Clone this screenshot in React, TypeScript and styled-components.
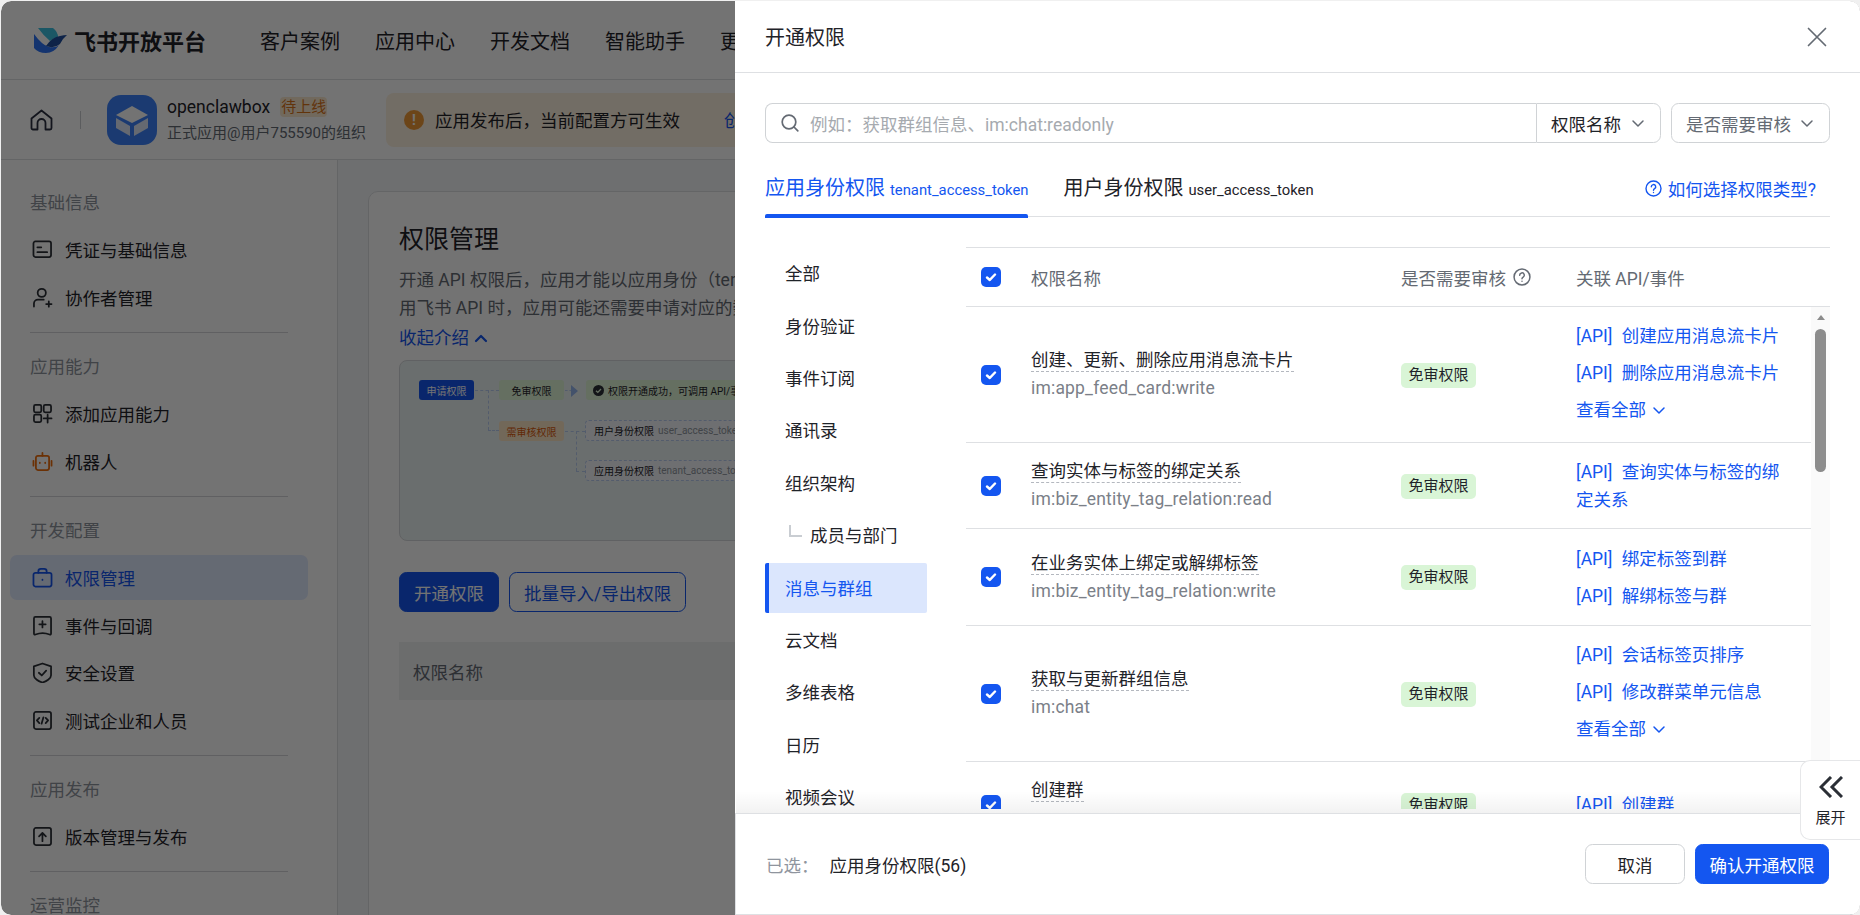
import styled, { createGlobalStyle } from "styled-components";

const GlobalStyle = createGlobalStyle`
  html, body {
    margin: 0;
    padding: 0;
    background: #f0f0f0;
  }
  * {
    box-sizing: border-box;
  }
  svg {
    flex-shrink: 0;
  }
  body {
    font-family: Roboto, "Noto Sans CJK SC", sans-serif;
    color: #1f2329;
  }
`;

const Frame = styled.div`
  width: 1860px;
  height: 915px;
  padding: 1px 0 0 1px;
  overflow: hidden;
`;

const Screen = styled.div`
  position: relative;
  width: 1859px;
  height: 914px;
  overflow: hidden;
  border-radius: 10px;
  background: #fff;
`;

const Mask = styled.div`
  position: absolute;
  inset: 0;
  background: rgba(0, 0, 0, 0.55);
  backdrop-filter: blur(0.5px);
`;

/* ---------- page behind the drawer ---------- */

const PageLayer = styled.div`
  width: 740px;
  height: 100%;
  overflow: hidden;
`;

const TopNav = styled.header`
  display: flex;
  align-items: center;
  height: 79px;
  padding-left: 33px;
  border-bottom: 1px solid #dee0e3;
`;

const BrandName = styled.div`
  flex: none;
  margin-left: 7px;
  width: 132px;
  font-size: 22px;
  font-weight: 700;
  white-space: nowrap;
`;

const TopLinks = styled.nav`
  flex: none;
  display: flex;
  gap: 35px;
  margin-left: 54px;
  font-size: 20px;
  white-space: nowrap;
`;

const SubBar = styled.div`
  display: flex;
  align-items: center;
  height: 80px;
  padding-left: 29px;
  border-bottom: 1px solid #dee0e3;
  white-space: nowrap;
`;

const VDivider = styled.span`
  flex: none;
  width: 1px;
  height: 18px;
  margin: 0 26px 0 27px;
  background: #c9cdd1;
`;

const AppInfo = styled.div`
  flex: none;
  width: 219px;
  margin-left: 10px;
  line-height: 26px;
`;

const AppName = styled.div`
  display: flex;
  align-items: center;
  font-size: 17.5px;
`;

const AppStatus = styled.span`
  margin-left: 10px;
  padding: 0 1px;
  height: 20px;
  line-height: 20px;
  border-radius: 4px;
  font-size: 15px;
  color: #d9741a;
  background: #fbe9cf;
`;

const AppOrg = styled.div`
  font-size: 15px;
  color: #646a73;
`;

const Notice = styled.div`
  flex: none;
  display: flex;
  align-items: center;
  width: 500px;
  height: 54px;
  padding-left: 18px;
  border-radius: 8px;
  font-size: 17.5px;
  background: #fdf1df;
`;

const NoticeIcon = styled.span`
  display: flex;
  align-items: center;
  justify-content: center;
  width: 20px;
  height: 20px;
  margin-right: 11px;
  border-radius: 50%;
  font-size: 14px;
  font-weight: 700;
  color: #fff;
  background: #f09a37;
`;

const NoticeLink = styled.span`
  margin-left: 44px;
  color: #1456f0;
`;

const Body = styled.div`
  display: flex;
  height: 755px;
`;

const Sidebar = styled.aside`
  flex: none;
  width: 337px;
  padding-top: 29.5px;
  border-right: 1px solid #dee0e3;
`;

const GroupLabel = styled.div`
  height: 26px;
  margin: 0 0 11.5px 29px;
  line-height: 26px;
  font-size: 17.5px;
  color: #8f959e;
`;

const GroupRule = styled.div`
  height: 1px;
  margin: 12px 49px 21px 29px;
  background: #d4d6d9;
`;

const SideItem = styled.div<{ $active?: boolean }>`
  display: flex;
  align-items: center;
  gap: 12px;
  height: 45px;
  margin: 2.5px 29px 0 9px;
  padding-left: 22px;
  border-radius: 7px;
  font-size: 17.5px;
  color: ${(p) => (p.$active ? "#1456f0" : "#1f2329")};
  background: ${(p) => (p.$active ? "#e1eaff" : "transparent")};
  &:first-of-type {
    margin-top: 0;
  }
`;

const SideIcon = styled.svg<{ $tone?: string }>`
  flex: none;
  width: 21px;
  height: 21px;
  fill: none;
  stroke: ${(p) => p.$tone || "#2b2f36"};
  stroke-width: 1.8;
  stroke-linecap: round;
  stroke-linejoin: round;
`;

const Main = styled.main`
  flex: none;
  width: 403px;
  padding: 31px 0 0 30px;
  background: #f4f7f8;
`;

const Card = styled.section`
  width: 900px;
  height: 800px;
  padding: 30px;
  border: 1px solid #dee0e3;
  border-radius: 10px;
  background: #fff;
`;

const PageTitle = styled.h1`
  margin: 0 0 9px;
  font-size: 25px;
  font-weight: 400;
  line-height: 35px;
`;

const Intro = styled.p`
  margin: 0;
  width: 340px;
  overflow: hidden;
  line-height: 28px;
  font-size: 17.5px;
  color: #646a73;
  white-space: nowrap;
`;

const Collapse = styled.div`
  display: flex;
  align-items: center;
  gap: 5px;
  margin-top: 2px;
  line-height: 28px;
  font-size: 17.5px;
  color: #1456f0;
`;

const Diagram = styled.div`
  position: relative;
  height: 181px;
  margin-top: 8px;
  border: 1px solid #d5d8db;
  border-radius: 8px;
  background: #ecf3f4;
`;

const Chip = styled.div<{ $x: number; $y: number; $w: number; $bg: string; $color: string }>`
  position: absolute;
  left: ${(p) => p.$x}px;
  top: ${(p) => p.$y}px;
  width: ${(p) => p.$w}px;
  height: 20px;
  display: flex;
  align-items: center;
  justify-content: center;
  border-radius: 3px;
  font-size: 10px;
  color: ${(p) => p.$color};
  background: ${(p) => p.$bg};
  white-space: nowrap;
`;

const ResultChip = styled.div`
  position: absolute;
  left: 186px;
  top: 19px;
  width: 160px;
  height: 20px;
  overflow: hidden;
  display: flex;
  align-items: center;
  gap: 4px;
  padding-left: 7px;
  border-radius: 3px;
  font-size: 10px;
  background: #e0f5d8;
  white-space: nowrap;
`;

const DashBox = styled.div<{ $y: number }>`
  position: absolute;
  left: 185px;
  top: ${(p) => p.$y}px;
  width: 160px;
  height: 21px;
  overflow: hidden;
  display: flex;
  align-items: center;
  gap: 4px;
  padding-left: 8px;
  border: 1px dashed #b9cdf0;
  border-radius: 4px;
  font-size: 10px;
  white-space: nowrap;
  background: #f4f7fa;
`;

const DashToken = styled.span`
  color: #8f959e;
`;

const Wire = styled.span<{ $x: number; $y: number; $w?: number; $h?: number }>`
  position: absolute;
  left: ${(p) => p.$x}px;
  top: ${(p) => p.$y}px;
  width: ${(p) => p.$w || 0}px;
  height: ${(p) => p.$h || 0}px;
  border-top: ${(p) => (p.$w ? "1px dashed #b9cdf0" : "none")};
  border-left: ${(p) => (p.$h ? "1px dashed #b9cdf0" : "none")};
`;

const FlowArrow = styled.span`
  position: absolute;
  left: 171px;
  top: 24px;
  border-left: 7px solid #94b5ee;
  border-top: 6px solid transparent;
  border-bottom: 6px solid transparent;
`;

const Actions = styled.div`
  display: flex;
  gap: 10px;
  margin-top: 31px;
`;

const PageButton = styled.div<{ $primary?: boolean }>`
  display: flex;
  align-items: center;
  justify-content: center;
  height: 40px;
  padding: 0 14px;
  border: 1px solid #1456f0;
  border-radius: 7.5px;
  font-size: 17.5px;
  color: ${(p) => (p.$primary ? "#fff" : "#1456f0")};
  background: ${(p) => (p.$primary ? "#1456f0" : "#fff")};
`;

const PageTableHead = styled.div`
  display: flex;
  align-items: center;
  height: 58px;
  margin-top: 30px;
  padding-left: 14px;
  font-size: 17.5px;
  color: #646a73;
  background: #f0f1f2;
`;

/* ---------- drawer ---------- */

const Drawer = styled.div`
  position: absolute;
  top: 0;
  right: 0;
  bottom: 0;
  width: 1125px;
  display: flex;
  flex-direction: column;
  background: #fff;
`;

const DrawerHead = styled.div`
  flex: none;
  display: flex;
  align-items: center;
  justify-content: space-between;
  height: 72px;
  padding: 0 33px 0 30px;
  border-bottom: 1px solid #dee0e3;
  font-size: 20px;
`;

const CloseIcon = styled.svg`
  width: 20px;
  height: 20px;
  fill: none;
  stroke: #646a73;
  stroke-width: 1.7;
  stroke-linecap: round;
`;

const FilterRow = styled.div`
  flex: none;
  display: flex;
  height: 40px;
  margin: 30px 30px 0 30px;
  font-size: 17.5px;
`;

const SearchField = styled.div`
  flex: 1;
  display: flex;
  align-items: center;
  gap: 11px;
  padding-left: 15px;
  border: 1px solid #d0d3d6;
  border-right: none;
  border-radius: 7.5px 0 0 7.5px;
  color: #a6aaaf;
`;

const SearchIcon = styled.svg`
  width: 18px;
  height: 18px;
  fill: none;
  stroke: #646a73;
  stroke-width: 1.7;
  stroke-linecap: round;
`;

const Select = styled.div<{ $attached?: boolean; $muted?: boolean }>`
  flex: none;
  display: flex;
  align-items: center;
  justify-content: space-between;
  width: ${(p) => (p.$attached ? "125px" : "159px")};
  margin-left: ${(p) => (p.$attached ? "0" : "10px")};
  padding: 0 15px 0 14px;
  border: 1px solid #d0d3d6;
  border-radius: ${(p) => (p.$attached ? "0 7.5px 7.5px 0" : "7.5px")};
  color: ${(p) => (p.$muted ? "#646a73" : "#1f2329")};
`;

const Chevron = styled.svg<{ $color?: string; $bold?: boolean }>`
  flex: none;
  width: 14px;
  height: 14px;
  fill: none;
  stroke: ${(p) => p.$color || "#646a73"};
  stroke-width: ${(p) => (p.$bold ? 2.2 : 1.5)};
  stroke-linecap: round;
  stroke-linejoin: round;
`;

const TabBar = styled.div`
  flex: none;
  display: flex;
  gap: 35px;
  height: 74px;
  margin: 0 30px;
  border-bottom: 1px solid #dee0e3;
`;

const Tab = styled.div<{ $active?: boolean }>`
  position: relative;
  display: flex;
  align-items: baseline;
  gap: 5px;
  height: 73px;
  padding-top: 31px;
  line-height: 28px;
  font-size: 20px;
  white-space: nowrap;
  color: ${(p) => (p.$active ? "#1456f0" : "#1f2329")};
  &::after {
    content: "";
    display: ${(p) => (p.$active ? "block" : "none")};
    position: absolute;
    left: 0;
    right: 0;
    bottom: -2px;
    height: 4px;
    border-radius: 2px 2px 0 0;
    background: #1456f0;
  }
`;

const TabToken = styled.span`
  font-size: 14.8px;
`;

const TypeHelp = styled.div`
  display: flex;
  align-items: center;
  gap: 6px;
  margin: 31px 14px 0 auto;
  height: 28px;
  font-size: 17.5px;
  color: #1456f0;
  white-space: nowrap;
`;

const HelpIcon = styled.svg<{ $color: string; $large?: boolean }>`
  flex: none;
  width: ${(p) => (p.$large ? 18 : 17)}px;
  height: ${(p) => (p.$large ? 18 : 17)}px;
  fill: none;
  stroke: ${(p) => p.$color};
  stroke-width: 1.4;
  stroke-linecap: round;
`;

const DrawerBody = styled.div`
  flex: 1;
  min-height: 0;
  display: flex;
  margin: 0 0 4px 30px;
  overflow: hidden;
`;

const CategoryNav = styled.div`
  flex: none;
  width: 162px;
  margin-right: 39px;
  padding-top: 31.5px;
`;

const Category = styled.div<{ $active?: boolean }>`
  display: flex;
  align-items: center;
  height: 50px;
  margin-bottom: 2.4px;
  padding: 0 0 1.5px 16px;
  border-left: 4px solid ${(p) => (p.$active ? "#1456f0" : "transparent")};
  border-radius: 2px;
  font-size: 17.5px;
  color: ${(p) => (p.$active ? "#1456f0" : "#1f2329")};
  background: ${(p) => (p.$active ? "#dbe6fd" : "transparent")};
`;

const SubMark = styled.span`
  width: 13px;
  height: 12px;
  margin: 0 8px 0 4px;
  border-left: 2px solid #c9cdd2;
  border-bottom: 2px solid #c9cdd2;
  transform: translateY(-4px);
`;

const TableArea = styled.div`
  flex: 1;
  min-width: 0;
  display: flex;
  flex-direction: column;
  margin: 30px 30px 0 0;
  border-top: 1px solid #dee0e3;
`;

const HeadRow = styled.div`
  flex: none;
  display: grid;
  grid-template-columns: 65px 370px 175px 1fr;
  align-items: center;
  height: 59px;
  border-bottom: 1px solid #dee0e3;
  font-size: 17.5px;
  color: #646a73;
`;

const HeadAudit = styled.div`
  display: flex;
  align-items: center;
  gap: 7px;
`;

const CheckCell = styled.div`
  display: flex;
  padding-left: 15px;
`;

const CheckBox = styled.span`
  display: flex;
  align-items: center;
  justify-content: center;
  width: 20px;
  height: 20px;
  border-radius: 5px;
  background: #1456f0;
`;

const CheckMark = styled.svg`
  width: 12px;
  height: 12px;
  fill: none;
  stroke: #fff;
  stroke-width: 2.4;
  stroke-linecap: round;
  stroke-linejoin: round;
`;

const ScrollBox = styled.div`
  flex: 1;
  min-height: 0;
  display: flex;
  overflow: hidden;
`;

const Rows = styled.div`
  flex: 1;
  min-width: 0;
`;

const Row = styled.div<{ $h: number }>`
  display: grid;
  grid-template-columns: 65px 370px 175px 1fr;
  align-items: center;
  height: ${(p) => p.$h}px;
  border-bottom: 1px solid #dee0e3;
`;

const ScopeTitle = styled.div`
  display: table;
  line-height: 22px;
  font-size: 17.5px;
  border-bottom: 1px dashed #b4b8bf;
`;

const ScopeKey = styled.div`
  margin-top: 4px;
  line-height: 24px;
  font-size: 17.5px;
  letter-spacing: 0.18px;
  color: #7b8088;
`;

const FreeTag = styled.span`
  display: block;
  width: 75px;
  height: 25px;
  margin-top: 1.5px;
  line-height: 25px;
  text-align: center;
  border-radius: 5px;
  font-size: 15px;
  color: #1f2329;
  background: #d9f5d6;
`;

const ApiList = styled.div`
  display: flex;
  flex-direction: column;
  gap: 9px;
  padding-right: 20px;
`;

const ApiLink = styled.div`
  line-height: 28px;
  font-size: 17.5px;
  word-spacing: 5px;
  color: #1456f0;
`;

const SeeAll = styled(ApiLink)`
  display: flex;
  align-items: center;
  gap: 6px;
  margin-bottom: 4px;
`;

const ScrollTrack = styled.div`
  flex: none;
  width: 19px;
  display: flex;
  flex-direction: column;
  align-items: center;
  padding-top: 8px;
  background: #fafafa;
`;

const ScrollUp = styled.span`
  border-left: 4px solid transparent;
  border-right: 4px solid transparent;
  border-bottom: 5px solid #8c8c8c;
`;

const ScrollThumb = styled.span`
  width: 11px;
  height: 143px;
  margin-top: 9px;
  border-radius: 6px;
  background: #8c8c8c;
`;

const DrawerFoot = styled.div`
  position: relative;
  flex: none;
  display: flex;
  align-items: center;
  gap: 11px;
  height: 102px;
  padding: 0 31px 0 30px;
  border: 1px solid #dee0e3;
  border-right: none;
  font-size: 17.5px;
  &::before {
    content: "";
    position: absolute;
    left: 0;
    right: 0;
    top: -23px;
    height: 22px;
    background: linear-gradient(rgba(0, 0, 0, 0), rgba(0, 0, 0, 0.05));
  }
`;

const Picked = styled.span`
  color: #8f959e;
`;

const FootButtons = styled.div`
  display: flex;
  gap: 10px;
  margin-left: auto;
`;

const FootButton = styled.div<{ $primary?: boolean }>`
  display: flex;
  align-items: center;
  justify-content: center;
  width: ${(p) => (p.$primary ? "134px" : "100px")};
  height: 40px;
  border: 1px solid ${(p) => (p.$primary ? "#1456f0" : "#d0d3d6")};
  border-radius: 7.5px;
  color: ${(p) => (p.$primary ? "#fff" : "#1f2329")};
  background: ${(p) => (p.$primary ? "#1456f0" : "#fff")};
`;

const ExpandTab = styled.div`
  position: absolute;
  right: 0;
  top: 759px;
  width: 60px;
  height: 80px;
  display: flex;
  flex-direction: column;
  align-items: center;
  padding-top: 15px;
  border: 1px solid #e6e7e9;
  border-right: none;
  border-radius: 10px 0 0 10px;
  font-size: 15px;
  background: #fff;
`;

const ExpandIcon = styled.svg`
  width: 24px;
  height: 22px;
  margin-bottom: 9px;
  fill: none;
  stroke: #2b2f36;
  stroke-width: 3;
`;

const ExpandLabel = styled.span`
  line-height: 22px;
`;

function Logo() {
  return (
    <svg width="33" height="26" viewBox="0 0 33 26">
      <path d="M4 1h15q5 4 5 9-4 1-8 4Q9 8 4 1z" fill="#3cc0e0" />
      <path d="M0 7q8 11 15 13 7 1 10-2-5 8-13 8-8 0-12-5z" fill="#2e74f5" />
      <path d="M12 19q6-9 14-10 4-1 7-1-5 4-7 9-6 5-14 2z" fill="#1f4fa0" />
    </svg>
  );
}

function AppCube() {
  return (
    <svg width="50" height="50" viewBox="0 0 50 50">
      <rect width="50" height="50" rx="14" fill="#3c82fa" />
      <path d="M25 11l16 9-16 8-16-8z" fill="#fff" />
      <path d="M9 23l14 8v10L9 33z" fill="#dfe8fb" />
      <path d="M41 23l-14 8v10l14-8z" fill="#dfe8fb" />
    </svg>
  );
}

function HomeGlyph() {
  return (
    <svg width="23" height="22" viewBox="0 0 23 22" fill="none" stroke="#2b3040" strokeWidth="1.8" strokeLinejoin="round">
      <path d="M1.5 9.5 11.5 1.5l10 8V19a1.5 1.5 0 0 1-1.5 1.5h-4.500V14a4 4 0 0 0-8 0v6.500H3A1.500 1.500 0 0 1 1.500 19z" />
    </svg>
  );
}

function Caret({ up, color, bold }: { up?: boolean; color?: string; bold?: boolean }) {
  return (
    <Chevron viewBox="0 0 14 14" $color={color} $bold={bold}>
      <path d={up ? "M2 10l5-5 5 5" : "M2 5l5 5 5-5"} />
    </Chevron>
  );
}

function Question({ color, large }: { color: string; large?: boolean }) {
  return (
    <HelpIcon viewBox="0 0 17 17" $color={color} $large={large}>
      <circle cx="8.500" cy="8.500" r="7.500" />
      <path d="M6.300 6.800a2.200 2.200 0 1 1 3.300 1.900c-.7.400-1.100.8-1.100 1.500" />
      <path d="M8.500 12.400v.2" />
    </HelpIcon>
  );
}

function Check() {
  return (
    <CheckCell>
      <CheckBox>
        <CheckMark viewBox="0 0 12 12">
          <path d="M2 6.500l2.800 2.500L10 3.500" />
        </CheckMark>
      </CheckBox>
    </CheckCell>
  );
}

const iconShapes: Record<string, React.ReactNode> = {
  cred: (
    <>
      <rect x="1.500" y="2.500" width="18" height="16" rx="2" />
      <path d="M5.500 8.500h4M5.500 13.500h10" />
    </>
  ),
  people: (
    <>
      <circle cx="10" cy="6" r="4.200" />
      <path d="M2 20v-3a4 4 0 0 1 4-4h6M14.500 17.500h5.500M17.200 14.800v5.400" />
    </>
  ),
  apps: (
    <>
      <rect x="2" y="2" width="7.500" height="7.500" rx="1.500" />
      <rect x="12" y="2" width="7.500" height="7.500" rx="1.500" />
      <rect x="2" y="12" width="7.500" height="7.500" rx="1.500" />
      <path d="M12 15.800h8M16 12v8" />
    </>
  ),
  bot: (
    <>
      <rect x="4" y="5" width="13.500" height="14.500" rx="2" />
      <path d="M10.700 2v3M1.500 10v5M20 10v5M8 12v.3M13.500 12v.3" />
    </>
  ),
  lock: (
    <>
      <rect x="1.500" y="6" width="18.500" height="14" rx="2" />
      <path d="M6.500 6V4.500A2.500 2.500 0 0 1 9 2h3.500A2.500 2.500 0 0 1 15 4.500V6M10.700 13v.3" />
    </>
  ),
  event: (
    <>
      <path d="M2 3.500A1.500 1.500 0 0 1 3.500 2h14.500A1.500 1.500 0 0 1 19.500 3.500V19q0 1.500-1.500 1-7-3-14.500 0-1.500.5-1.500-1z" />
      <path d="M7.500 9.500h6.500M10.700 6.300v6.400" />
    </>
  ),
  shield: (
    <>
      <path d="M10.700 1.500 19.500 4.500v9c0 3.500-5 6.500-8.800 7.500-3.800-1-8.800-4-8.800-7.500v-9z" />
      <path d="M7 11l3 2.800 4.500-5" />
    </>
  ),
  code: (
    <>
      <rect x="2" y="2" width="17.500" height="17.500" rx="2" />
      <path d="M7.500 8 5 10.700l2.500 2.800M14 8l2.500 2.700-2.500 2.800M11.700 7.500 9.800 14" />
    </>
  ),
  upload: (
    <>
      <rect x="2" y="2" width="17.500" height="17.500" rx="2" />
      <path d="M10.700 15.500V7M7.200 10.500l3.500-3.500 3.500 3.500" />
    </>
  ),
};

function SideLink({
  icon,
  tone,
  active,
  children,
}: {
  icon: string;
  tone?: string;
  active?: boolean;
  children: React.ReactNode;
}) {
  return (
    <SideItem $active={active}>
      <SideIcon viewBox="0 0 21.500 21.500" $tone={tone}>
        {iconShapes[icon]}
      </SideIcon>
      {children}
    </SideItem>
  );
}

const categories = ["全部", "身份验证", "事件订阅", "通讯录", "组织架构", "成员与部门", "消息与群组", "云文档", "多维表格", "日历", "视频会议"];

const scopes = [
  { h: 136, title: "创建、更新、删除应用消息流卡片", key: "im:app_feed_card:write", apis: ["创建应用消息流卡片", "删除应用消息流卡片"], more: true },
  { h: 86, title: "查询实体与标签的绑定关系", key: "im:biz_entity_tag_relation:read", apis: ["查询实体与标签的绑定关系"], more: false },
  { h: 97, title: "在业务实体上绑定或解绑标签", key: "im:biz_entity_tag_relation:write", apis: ["绑定标签到群", "解绑标签与群"], more: false },
  { h: 136, title: "获取与更新群组信息", key: "im:chat", apis: ["会话标签页排序", "修改群菜单元信息"], more: true },
  { h: 86, title: "创建群", key: "im:chat:create", apis: ["创建群"], more: false },
];

export default function App() {
  return (
    <Frame>
      <GlobalStyle />
      <Screen>
        <PageLayer>
          <TopNav>
            <Logo />
            <BrandName>飞书开放平台</BrandName>
            <TopLinks>
              <span>客户案例</span>
              <span>应用中心</span>
              <span>开发文档</span>
              <span>智能助手</span>
              <span>更新日志</span>
            </TopLinks>
          </TopNav>
          <SubBar>
            <HomeGlyph />
            <VDivider />
            <AppCube />
            <AppInfo>
              <AppName>
                openclawbox<AppStatus>待上线</AppStatus>
              </AppName>
              <AppOrg>正式应用@用户755590的组织</AppOrg>
            </AppInfo>
            <Notice>
              <NoticeIcon>!</NoticeIcon>
              应用发布后，当前配置方可生效
              <NoticeLink>创建版本</NoticeLink>
            </Notice>
          </SubBar>
          <Body>
            <Sidebar>
              <GroupLabel>基础信息</GroupLabel>
              <SideLink icon="cred">凭证与基础信息</SideLink>
              <SideLink icon="people">协作者管理</SideLink>
              <GroupRule />
              <GroupLabel>应用能力</GroupLabel>
              <SideLink icon="apps">添加应用能力</SideLink>
              <SideLink icon="bot" tone="#ed6d0c">机器人</SideLink>
              <GroupRule />
              <GroupLabel>开发配置</GroupLabel>
              <SideLink icon="lock" tone="#1456f0" active>权限管理</SideLink>
              <SideLink icon="event">事件与回调</SideLink>
              <SideLink icon="shield">安全设置</SideLink>
              <SideLink icon="code">测试企业和人员</SideLink>
              <GroupRule />
              <GroupLabel>应用发布</GroupLabel>
              <SideLink icon="upload">版本管理与发布</SideLink>
              <GroupRule />
              <GroupLabel>运营监控</GroupLabel>
            </Sidebar>
            <Main>
              <Card>
                <PageTitle>权限管理</PageTitle>
                <Intro>开通 API 权限后，应用才能以应用身份（tenant_access_token）调用对应的 API。</Intro>
                <Intro>用飞书 API 时，应用可能还需要申请对应的数据权限。</Intro>
                <Collapse>
                  收起介绍
                  <Caret up bold color="#1456f0" />
                </Collapse>
                <Diagram>
                  <Wire $x={75} $y={29} $w={24} />
                  <Wire $x={88} $y={29} $h={40} />
                  <Wire $x={88} $y={69} $w={11} />
                  <Wire $x={165} $y={70} $w={20} />
                  <Wire $x={176} $y={70} $h={40} />
                  <Wire $x={176} $y={110} $w={9} />
                  <Wire $x={165} $y={29} $w={7} />
                  <FlowArrow />
                  <Chip $x={19} $y={19} $w={55} $bg="#1456f0" $color="#fff">申请权限</Chip>
                  <Chip $x={99} $y={19} $w={65} $bg="#e0f5d8" $color="#1f2329">免审权限</Chip>
                  <ResultChip>
                    <svg width="11" height="11" viewBox="0 0 11 11">
                      <circle cx="5.500" cy="5.500" r="5.500" fill="#2b2f36" />
                      <path d="M3 5.700l1.800 1.700L8 4" fill="none" stroke="#e0f5d8" strokeWidth="1.300" />
                    </svg>
                    权限开通成功，可调用 API/事件
                  </ResultChip>
                  <Chip $x={99} $y={60} $w={65} $bg="#fde6c6" $color="#d9590b">需审核权限</Chip>
                  <DashBox $y={59}>
                    用户身份权限 <DashToken>user_access_token</DashToken>
                  </DashBox>
                  <DashBox $y={99}>
                    应用身份权限 <DashToken>tenant_access_token</DashToken>
                  </DashBox>
                </Diagram>
                <Actions>
                  <PageButton $primary>开通权限</PageButton>
                  <PageButton>批量导入/导出权限</PageButton>
                </Actions>
                <PageTableHead>权限名称</PageTableHead>
              </Card>
            </Main>
          </Body>
        </PageLayer>
        <Mask />
        <Drawer>
          <DrawerHead>
            开通权限
            <CloseIcon viewBox="0 0 20 20">
              <path d="M1.500 1.500l17 17M18.500 1.500l-17 17" />
            </CloseIcon>
          </DrawerHead>
          <FilterRow>
            <SearchField>
              <SearchIcon viewBox="0 0 18 18">
                <circle cx="8" cy="8" r="6.800" />
                <path d="M13 13l3.800 3.800" />
              </SearchIcon>
              例如：获取群组信息、im:chat:readonly
            </SearchField>
            <Select $attached>
              权限名称
              <Caret />
            </Select>
            <Select $muted>
              是否需要审核
              <Caret />
            </Select>
          </FilterRow>
          <TabBar>
            <Tab $active>
              应用身份权限<TabToken>tenant_access_token</TabToken>
            </Tab>
            <Tab>
              用户身份权限<TabToken>user_access_token</TabToken>
            </Tab>
            <TypeHelp>
              <Question color="#1456f0" />
              如何选择权限类型?
            </TypeHelp>
          </TabBar>
          <DrawerBody>
            <CategoryNav>
              {categories.map((name) => (
                <Category key={name} $active={name === "消息与群组"}>
                  {name === "成员与部门" && <SubMark />}
                  {name}
                </Category>
              ))}
            </CategoryNav>
            <TableArea>
              <HeadRow>
                <Check />
                <span>权限名称</span>
                <HeadAudit>
                  是否需要审核
                  <Question color="#646a73" large />
                </HeadAudit>
                <span>关联 API/事件</span>
              </HeadRow>
              <ScrollBox>
                <Rows>
                  {scopes.map((scope) => (
                    <Row key={scope.key} $h={scope.h}>
                      <Check />
                      <div>
                        <ScopeTitle>{scope.title}</ScopeTitle>
                        <ScopeKey>{scope.key}</ScopeKey>
                      </div>
                      <div>
                        <FreeTag>免审权限</FreeTag>
                      </div>
                      <ApiList>
                        {scope.apis.map((api) => (
                          <ApiLink key={api}>[API] {api}</ApiLink>
                        ))}
                        {scope.more && (
                          <SeeAll>
                            查看全部
                            <Caret color="#1456f0" />
                          </SeeAll>
                        )}
                      </ApiList>
                    </Row>
                  ))}
                </Rows>
                <ScrollTrack>
                  <ScrollUp />
                  <ScrollThumb />
                </ScrollTrack>
              </ScrollBox>
            </TableArea>
          </DrawerBody>
          <DrawerFoot>
            <Picked>已选：</Picked>
            <span>应用身份权限(56)</span>
            <FootButtons>
              <FootButton>取消</FootButton>
              <FootButton $primary>确认开通权限</FootButton>
            </FootButtons>
          </DrawerFoot>
        </Drawer>
        <ExpandTab>
          <ExpandIcon viewBox="0 0 24 22">
            <path d="M12 1 2 11l10 10M23 1 13 11l10 10" />
          </ExpandIcon>
          <ExpandLabel>展开</ExpandLabel>
        </ExpandTab>
      </Screen>
    </Frame>
  );
}
